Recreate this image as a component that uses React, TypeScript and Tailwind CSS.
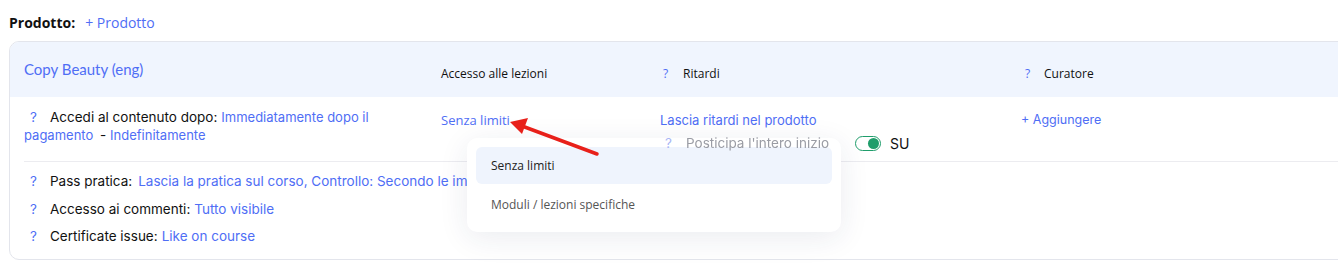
import React from "react";

const Q = () => (
  <span className="inline-block w-[19px] mr-[7px] text-center text-[#4f6ef5]">?</span>
);

export default function App() {
  return (
    <main className="relative w-[1338px] h-[274px] overflow-hidden bg-white font-['Inter',sans-serif] text-[13.5px] text-[#111]">
      {/* Prodotto */}
      <div className="flex items-center h-[18px] mt-[13px] ml-[9px] font-['Open_Sans',sans-serif]">
        <span className="font-bold text-[14px] text-[#111]">Prodotto:</span>
        <span className="ml-[10px] text-[#4f6ef5] text-[14px]">+ Prodotto</span>
      </div>

      {/* Card */}
      <div className="mt-[10px] ml-[9px] w-[1360px] border border-[#e3e5ec] rounded-l-[10px] overflow-hidden">
        {/* Header */}
        <div className="grid grid-cols-[417px_219px_360px_1fr] h-[55px] px-[14px] bg-[#f0f5fe] items-start">
          <div className="pt-[17px] font-['Lato',sans-serif] text-[15px] leading-[20px] text-[#4f6ef5]">
            Copy Beauty (eng)
          </div>
          <div className="pt-[24px] font-['Open_Sans',sans-serif] text-[12px] leading-[16px]">
            Accesso alle lezioni
          </div>
          <div className="pt-[24px] pl-[3px] font-['Open_Sans',sans-serif] text-[12px] leading-[16px] flex">
            <span className="w-[20px] text-[#4f6ef5]">?</span>
            <span>Ritardi</span>
          </div>
          <div className="pt-[24px] pl-[5px] font-['Open_Sans',sans-serif] text-[12px] leading-[16px] flex">
            <span className="w-[19px] text-[#4f6ef5]">?</span>
            <span>Curatore</span>
          </div>
        </div>

        {/* Row */}
        <div className="grid grid-cols-[417px_219px_360px_1fr] px-[14px] pt-[11px] h-[64px]">
          <div className="leading-[18px] pr-[40px]">
            <Q />
            <span>Accedi al contenuto dopo:</span>
            <span className="text-[#4f6ef5] ml-[4px] text-[13px]">Immediatamente dopo il pagamento</span>
            <span className="ml-[3px]"> - </span>
            <span className="text-[#4f6ef5] text-[13px]">Indefinitamente</span>
          </div>
          <div className="pt-[3px] leading-[18px] font-['Open_Sans',sans-serif] text-[13px] text-[#4f6ef5]">
            Senza limiti
          </div>
          <div className="pt-[3px]">
            <div className="leading-[18px] text-[13px] text-[#4f6ef5]">Lascia ritardi nel prodotto</div>
            <div className="relative z-10 flex items-center h-[20px] mt-[4px]">
              <span className="w-[26px] pl-[5px] text-[#a9b6f5]">?</span>
              <span className="w-[169px] whitespace-nowrap overflow-hidden text-[#9a9ca4] blur-[0.6px]">Posticipa l'intero inizio</span>
              <span className="w-[26px] h-[15px] rounded-full border-[1.5px] border-[#1f9d6b] flex items-center justify-end pr-[1px]">
                <span className="w-[11px] h-[11px] rounded-full bg-[#1f9d6b]" />
              </span>
              <span className="ml-[9px] text-[14px]">SU</span>
            </div>
          </div>
          <div className="pt-[3px] pl-[1px] leading-[18px] text-[12.5px] text-[#4f6ef5]">+ Aggiungere</div>
        </div>

        <div className="ml-[14px] border-t border-[#ececf0]" />

        {/* List */}
        <div className="px-[14px] pt-[10px] pb-[14px] flex flex-col gap-[9.5px] leading-[18px]">
          <div className="whitespace-nowrap">
            <Q />
            <span>Pass pratica:</span>
            <span className="ml-[6px] text-[#4f6ef5]">
              Lascia la pratica sul corso, Controllo: Secondo le impostazioni del corso
            </span>
          </div>
          <div>
            <Q />
            <span>Accesso ai commenti:</span>
            <span className="ml-[4px] text-[#4f6ef5]">Tutto visibile</span>
          </div>
          <div>
            <Q />
            <span>Certificate issue:</span>
            <span className="ml-[4px] text-[#4f6ef5]">Like on course</span>
          </div>
        </div>
      </div>

      {/* Dropdown */}
      <div className="absolute left-[467px] top-[138px] w-[374px] h-[94px] bg-white rounded-[10px] shadow-[0_6px_30px_rgba(30,40,90,0.09)] p-[9px] font-['Open_Sans',sans-serif] text-[12px]">
        <div className="h-[37px] rounded-[6px] bg-[#eff4fd] flex items-center px-[15px] text-[#222]">
          Senza limiti
        </div>
        <div className="h-[42px] flex items-center px-[15px] text-[#555]">
          Moduli / lezioni specifiche
        </div>
      </div>

      {/* Arrow */}
      <svg className="absolute left-[500px] top-[110px]" width="110" height="55" viewBox="0 0 110 55">
        <line x1="97" y1="44" x2="22" y2="16" stroke="#e8201a" strokeWidth="3.5" strokeLinecap="round" />
        <polygon points="10,12 28,8 22,24" fill="#e8201a" />
      </svg>
    </main>
  );
}
